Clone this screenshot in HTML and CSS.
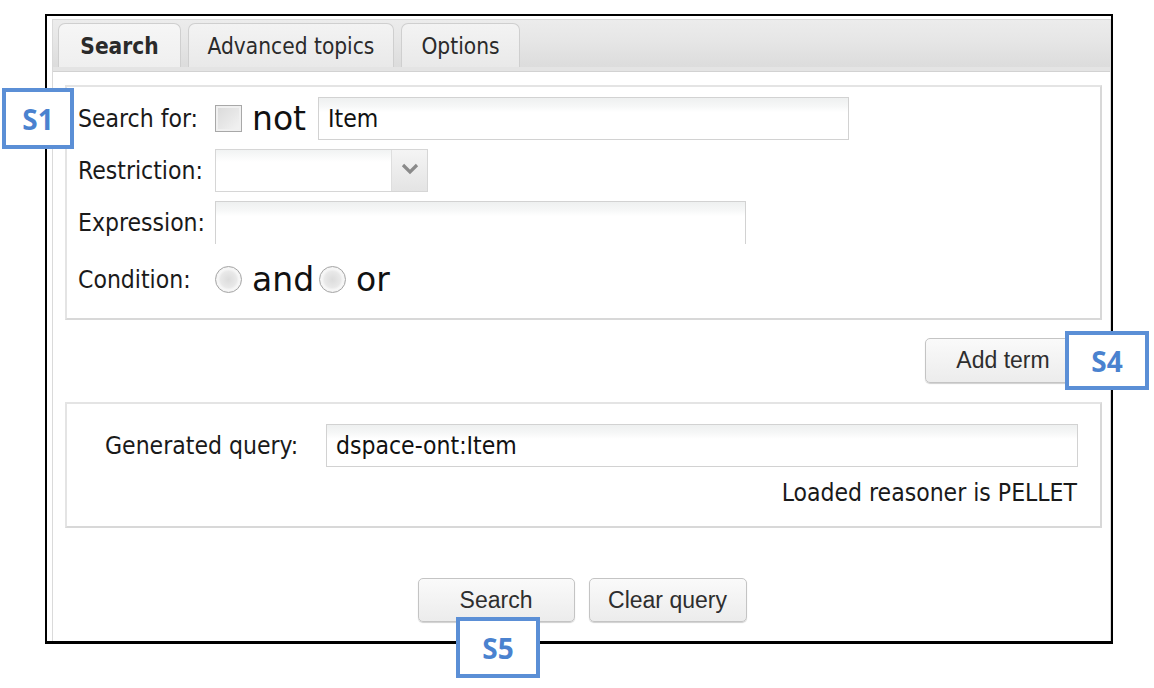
FILE: index.html
```html
<!DOCTYPE html>
<html>
<head>
<meta charset="utf-8">
<link rel="stylesheet" href="styles.css">
</head>
<body>
<div class="frame">
  <div class="panel">
    <div class="tabbar">
      <div class="tab active">Search</div>
      <div class="tab">Advanced topics</div>
      <div class="tab">Options</div>
    </div>
    <div class="content">
      <div class="box terms">
        <div class="row">
          <span class="label">Search for:</span>
          <span class="checkbox"></span>
          <span class="big not">not</span>
          <span class="input item">Item</span>
        </div>
        <div class="row">
          <span class="label">Restriction:</span>
          <span class="select"><span class="sel-val"></span><span class="sel-arrow"><svg width="20" height="12" viewBox="0 0 20 12"><path d="M3 2 L10 9 L17 2" fill="none" stroke="#8a8a8a" stroke-width="3.2"/></svg></span></span>
        </div>
        <div class="row">
          <span class="label">Expression:</span>
          <span class="input expr"></span>
        </div>
        <div class="row cond">
          <span class="label">Condition:</span>
          <span class="radio"></span>
          <span class="big">and</span>
          <span class="radio"></span>
          <span class="big">or</span>
        </div>
      </div>
      <div class="addrow">
        <span class="btn add">Add term</span>
      </div>
      <div class="box query">
        <div class="qrow">
          <span class="qlabel">Generated query:</span>
          <span class="input qinput">dspace-ont:Item</span>
        </div>
        <div class="reasoner">Loaded reasoner is PELLET</div>
      </div>
      <div class="actions">
        <span class="btn sbtn">Search</span>
        <span class="btn cbtn">Clear query</span>
      </div>
    </div>
  </div>
</div>
<div class="tag s1">S1</div>
<div class="tag s4">S4</div>
<div class="tag s5">S5</div>
</body>
</html>
```
FILE: styles.css
```css
html, body {
  margin: 0;
  padding: 0;
  background: #fff;
}
body {
  width: 1154px;
  height: 688px;
  position: relative;
  overflow: hidden;
  font-family: "DejaVu Sans Condensed", "DejaVu Sans", sans-serif;
  color: #1a1a1a;
}
.frame {
  margin: 14px 0 0 45px;
  width: 1057px;
  height: 622px;
  border: 2px solid #000;
  border-bottom-width: 3px;
  padding: 3px 2px 0 5px;
  display: flex;
}
.panel {
  flex: 1;
  border: 1px solid #dadada;
  border-bottom: none;
  display: flex;
  flex-direction: column;
}
.tabbar {
  height: 45px;
  padding: 2px 5px 0;
  background: linear-gradient(#ececec 0%, #e6e6e6 45%, #dcdcdc 100%);
  border-bottom: 4px solid #e4e4e4;
  box-shadow: 0 1px 0 #d2d2d2;
  display: flex;
  align-items: flex-end;
  gap: 7px;
}
.tab {
  height: 44px;
  padding: 0;
  box-sizing: border-box;
  border: 1px solid #cfcfcf;
  border-bottom: none;
  border-radius: 7px 7px 0 0;
  background: linear-gradient(#f3f3f3, #e9e9e9);
  display: flex;
  align-items: center;
  justify-content: center;
  white-space: nowrap;
  font-size: 22.5px;
  color: #2a2a2a;
}
.tab.active {
  font-weight: bold;
  background: linear-gradient(#f6f6f6, #efefef);
  width: 123px;
}
.tab:nth-child(2) { width: 206px; }
.tab:nth-child(3) { width: 119px; }
.content {
  padding: 14px 8px 0 12px;
  display: flex;
  flex-direction: column;
}
.box {
  border: 2px solid #e2e2e2;
  border-color: #e4e4e4 #d8d8d8 #d8d8d8 #e4e4e4;
}
.terms {
  height: 221px;
  padding: 10px 0 0 11px;
  box-sizing: content-box;
  overflow: hidden;
}
.row {
  height: 43px;
  display: flex;
  align-items: center;
  margin-bottom: 9px;
}
.row.cond {
  margin-top: 14px;
  margin-bottom: 0;
}
.label {
  width: 137px;
  font-size: 24.5px;
  flex: none;
}
.big {
  font-family: "DejaVu Sans", sans-serif;
  font-size: 33px;
  line-height: 1;
  margin-left: 10px;
  color: #111;
}
.not { margin-right: 12px; }
.checkbox {
  width: 25px;
  height: 25px;
  border: 1px solid #a8a8a8;
  background: linear-gradient(135deg, #d9d9d9, #f4f4f4);
  box-shadow: inset 0 0 0 2px #f0f0f0;
  flex: none;
}
.input {
  height: 41px;
  box-sizing: border-box;
  border: 1px solid #d2d2d2;
  background: linear-gradient(#eef0f0 0px, #f6f7f7 8px, #fff 14px);
  display: flex;
  align-items: center;
  padding-left: 9px;
  font-size: 24.5px;
  color: #111;
}
.item { width: 531px; height: 43px; }
.expr {
  width: 531px;
  height: 43px;
  border-bottom: none;
}
.select {
  width: 213px;
  height: 43px;
  box-sizing: border-box;
  border: 1px solid #d6d6d6;
  display: flex;
}
.sel-val {
  flex: 1;
  background: linear-gradient(#f1f3f3 0px, #fff 12px);
}
.sel-arrow {
  width: 36px;
  border-left: 1px solid #dedede;
  background: linear-gradient(#f4f4f4, #e4e4e4);
  display: flex;
  align-items: center;
  justify-content: center;
  padding-bottom: 4px;
  box-sizing: border-box;
}
.radio {
  width: 25px;
  height: 25px;
  border-radius: 50%;
  border: 1px solid #a5a5a5;
  background: radial-gradient(circle at 50% 50%, #dcdcdc 0%, #e8e8e8 45%, #f7f7f7 60%, #e0e0e0 100%);
  flex: none;
}
.big + .radio { margin-left: 5px; }
.addrow {
  display: flex;
  justify-content: flex-end;
  padding: 18px 21px 0 0;
  height: 45px;
}
.btn {
  height: 44px;
  box-sizing: border-box;
  border: 1px solid #c4c4c4;
  border-radius: 5px;
  background: linear-gradient(#fafafa, #ececec);
  box-shadow: 0 1px 1px #d0d0d0;
  display: flex;
  align-items: center;
  justify-content: center;
  font-family: "Liberation Sans", Arial, sans-serif;
  font-size: 23px;
  color: #2e2e2e;
}
.add { width: 156px; height: 45px; }
.query {
  margin-top: 19px;
  height: 126px;
  box-sizing: border-box;
  padding: 20px 22px 0 38px;
}
.qrow {
  display: flex;
  align-items: center;
}
.qlabel {
  width: 221px;
  font-size: 24.5px;
}
.qinput {
  width: 752px;
  height: 43px;
}
.reasoner {
  text-align: right;
  font-size: 24.5px;
  margin-top: 11px;
  padding-right: 1px;
}
.actions {
  margin-top: 50px;
  display: flex;
  justify-content: center;
  gap: 14px;
  padding-right: 3px;
}
.sbtn { width: 157px; }
.cbtn { width: 158px; }
.tag {
  position: absolute;
  box-sizing: border-box;
  border: 4px solid #5b8fd6;
  background: #fff;
  color: #4a82cf;
  font-family: "Open Sans", "DejaVu Sans", sans-serif;
  font-weight: bold;
  font-size: 28px;
  display: flex;
  align-items: center;
  justify-content: center;
}
.s1 { left: 2px; top: 88px; width: 72px; height: 61px; }
.s4 { left: 1065px; top: 331px; width: 84px; height: 59px; }
.s5 { left: 456px; top: 617px; width: 84px; height: 61px; }
```
